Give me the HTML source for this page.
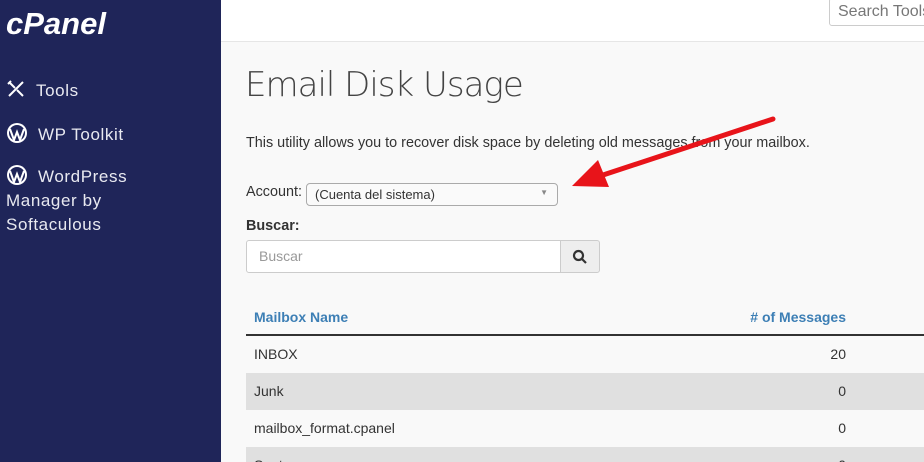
<!DOCTYPE html>
<html style="overflow:hidden"><head><style>
html,body{margin:0;width:924px;height:462px;overflow:hidden}
body{font-family:"Liberation Sans",sans-serif;background:#f9f9f9;position:relative}
.sb{position:absolute;left:0;top:0;width:221px;height:462px;background:#1f2559;color:#e8e9f0}
.logo{position:absolute;left:6px;top:6px;font-size:31px;font-weight:bold;font-style:italic;color:#fff;letter-spacing:0px}
.item{position:absolute;left:6px;font-size:17px;letter-spacing:.6px;line-height:24px}
.top{position:absolute;left:221px;top:0;right:0;height:41px;background:#fff;border-bottom:1px solid #e6e6e6}
.search{position:absolute;left:829px;top:-2px;width:110px;height:28px;border:1px solid #ccc;border-radius:3px;background:#fff;font-size:16px;color:#777;padding:4px 8px;box-sizing:border-box;white-space:nowrap;overflow:hidden}
h1{position:absolute;left:245px;top:65px;margin:0;font-family:"DejaVu Sans",sans-serif;font-weight:200;font-size:34px;color:#444;letter-spacing:-1px}
.t{position:absolute;font-size:14.4px;color:#333}
.sel{position:absolute;left:306px;top:183px;width:252px;height:23px;border:1px solid #aaa;border-radius:4px;background:#fafafa;box-sizing:border-box;font-size:13px;color:#333;padding:3px 8px}
.inp{position:absolute;left:246px;top:240px;width:315px;height:33px;border:1px solid #ccc;border-radius:3px 0 0 3px;background:#fff;box-sizing:border-box;font-size:14px;color:#999;padding:7px 12px}
.btn{position:absolute;left:560px;top:240px;width:40px;height:33px;border:1px solid #ccc;border-radius:0 3px 3px 0;background:#eee;box-sizing:border-box}
.row{position:absolute;left:246px;width:678px;height:37px;font-size:14px;color:#333}
.row span{position:absolute;left:8px;top:10px}
.row b{position:absolute;right:78px;top:10px;font-weight:normal}
</style></head><body>
<div class="sb">
<div class="logo">cPanel</div>
<div class="item" style="top:79px"><svg width="20" height="20" viewBox="0 0 20 20" style="vertical-align:-3px;margin-right:10px" stroke="#fff" stroke-width="2" fill="none"><path d="M3 17L17 3M3 3l6 6M11 11l6 6M2 5l3-3"/></svg>Tools</div>
<div class="item" style="top:122px"><svg width="22" height="22" viewBox="0 0 22 22" style="vertical-align:-4px;margin-right:10px"><circle cx="11" cy="11" r="10" fill="#fff"/><circle cx="11" cy="11" r="8" fill="#1f2559"/><path d="M4 7l4 11 3-8 3 8 4-11" stroke="#fff" stroke-width="2" fill="none"/></svg>WP Toolkit</div>
<div class="item" style="top:164px"><svg width="22" height="22" viewBox="0 0 22 22" style="vertical-align:-4px;margin-right:10px"><circle cx="11" cy="11" r="10" fill="#fff"/><circle cx="11" cy="11" r="8" fill="#1f2559"/><path d="M4 7l4 11 3-8 3 8 4-11" stroke="#fff" stroke-width="2" fill="none"/></svg>WordPress<br>Manager by<br>Softaculous</div>
</div>
<div class="top"></div>
<div class="search">Search Tools</div>
<h1>Email Disk Usage</h1>
<div class="t" style="left:246px;top:135px">This utility allows you to recover disk space by deleting old messages from your mailbox.</div>
<div class="t" style="left:246px;top:184px">Account:</div>
<div class="sel">(Cuenta del sistema)<span style="position:absolute;right:9px;top:4px;font-size:8px;color:#888">▼</span></div>
<div class="t" style="left:246px;top:218px;font-weight:bold">Buscar:</div>
<div class="inp">Buscar</div>
<div class="btn"><svg width="16" height="16" viewBox="0 0 16 16" style="position:absolute;left:11px;top:8px" stroke="#333" stroke-width="2.2" fill="none"><circle cx="6.5" cy="6.5" r="4.5"/><path d="M10 10l4 4"/></svg></div>
<div class="row" style="top:300px;height:34px;color:#3d7fb5;font-weight:bold"><span style="top:9px">Mailbox Name</span><b style="top:9px;font-weight:bold">#&nbsp;of Messages</b></div>
<div style="position:absolute;left:246px;top:334px;width:678px;height:2px;background:#333"></div>
<div class="row" style="top:336px"><span>INBOX</span><b>20</b></div>
<div class="row" style="top:373px;background:#e0e0e0"><span>Junk</span><b>0</b></div>
<div class="row" style="top:410px"><span>mailbox_format.cpanel</span><b>0</b></div>
<div class="row" style="top:447px;background:#e0e0e0"><span>Sent</span><b>0</b></div>
<svg style="position:absolute;left:0;top:0" width="924" height="462"><path d="M773 119L600 176" stroke="#e8141a" stroke-width="5" stroke-linecap="round"/><path d="M572 186L598 160L609 187Z" fill="#e8141a"/></svg>
</body></html>
